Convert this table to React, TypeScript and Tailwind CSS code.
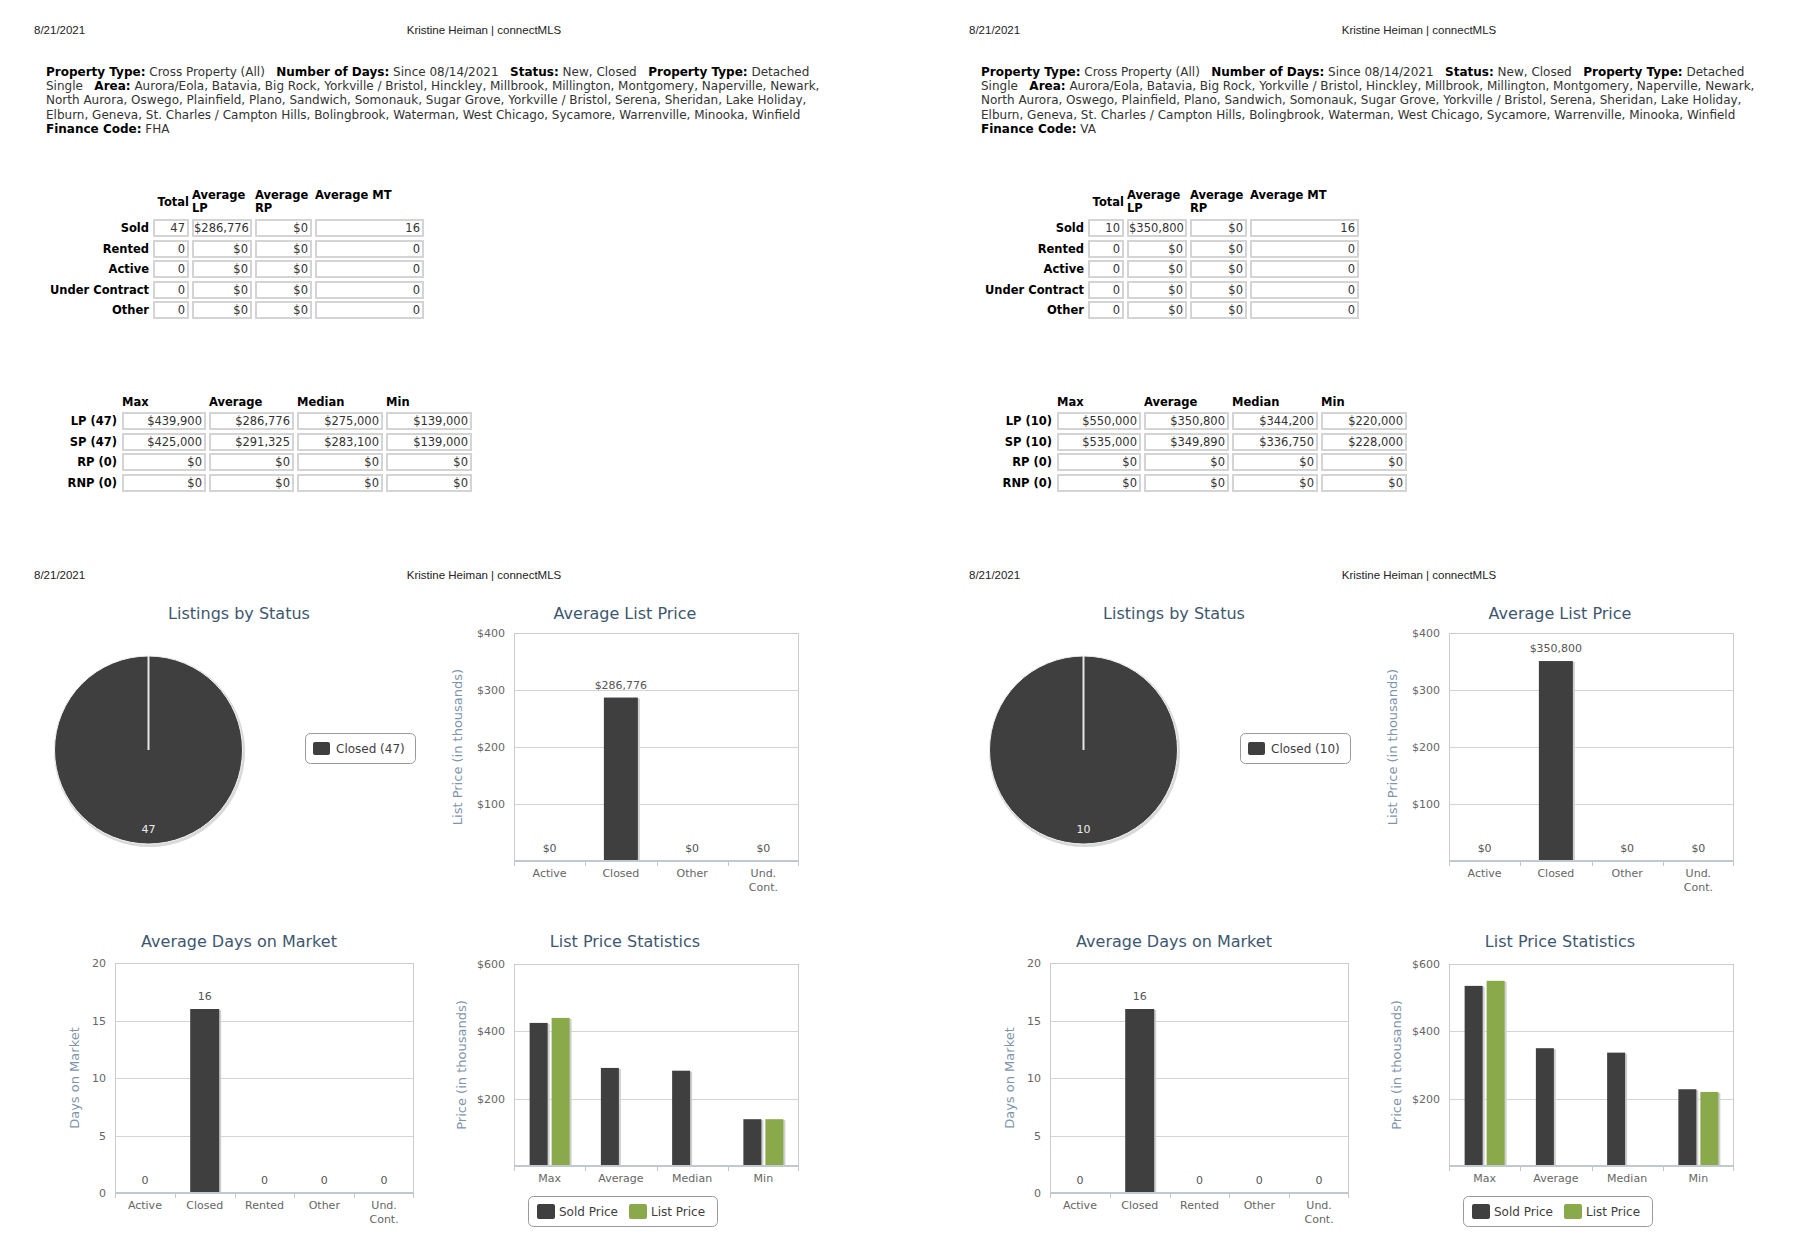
import React from "react";

type Stats = { sold: number[]; list: (number | null)[] };
type PageData = {
  finance: string;
  count: number;
  avgLP: number;
  avgLPLabel: string;
  t1: string[][];
  t2: string[][];
  stats: Stats;
};

const pages: PageData[] = [
  {
    finance: "FHA",
    count: 47,
    avgLP: 286.776,
    avgLPLabel: "$286,776",
    t1: [
      ["Sold", "47", "$286,776", "$0", "16"],
      ["Rented", "0", "$0", "$0", "0"],
      ["Active", "0", "$0", "$0", "0"],
      ["Under Contract", "0", "$0", "$0", "0"],
      ["Other", "0", "$0", "$0", "0"],
    ],
    t2: [
      ["LP (47)", "$439,900", "$286,776", "$275,000", "$139,000"],
      ["SP (47)", "$425,000", "$291,325", "$283,100", "$139,000"],
      ["RP (0)", "$0", "$0", "$0", "$0"],
      ["RNP (0)", "$0", "$0", "$0", "$0"],
    ],
    stats: { sold: [425, 291.325, 283.1, 139], list: [439.9, null, null, 139] },
  },
  {
    finance: "VA",
    count: 10,
    avgLP: 350.8,
    avgLPLabel: "$350,800",
    t1: [
      ["Sold", "10", "$350,800", "$0", "16"],
      ["Rented", "0", "$0", "$0", "0"],
      ["Active", "0", "$0", "$0", "0"],
      ["Under Contract", "0", "$0", "$0", "0"],
      ["Other", "0", "$0", "$0", "0"],
    ],
    t2: [
      ["LP (10)", "$550,000", "$350,800", "$344,200", "$220,000"],
      ["SP (10)", "$535,000", "$349,890", "$336,750", "$228,000"],
      ["RP (0)", "$0", "$0", "$0", "$0"],
      ["RNP (0)", "$0", "$0", "$0", "$0"],
    ],
    stats: { sold: [535, 349.89, 336.75, 228], list: [550, null, null, 220] },
  },
];

const DARK = "#3f3f3f";
const GREEN = "#89a94b";

function PageHeader() {
  return (
    <div className="flex pl-[34px] text-[11.5px] leading-[14px] text-[#222] font-['Liberation_Sans',Arial,sans-serif]">
      <div className="w-[350px]">8/21/2021</div>
      <div className="w-[200px] text-center whitespace-nowrap">Kristine Heiman | connectMLS</div>
    </div>
  );
}

function Criteria({ finance }: { finance: string }) {
  const sp = "\u00a0\u00a0\u00a0";
  return (
    <div className="ml-[46px] mt-[28px] text-[12px] leading-[14.2px] text-[#333] whitespace-nowrap">
      <div>
        <b className="text-black">Property Type:</b> Cross Property (All){sp}
        <b className="text-black">Number of Days:</b> Since 08/14/2021{sp}
        <b className="text-black">Status:</b> New, Closed{sp}
        <b className="text-black">Property Type:</b> Detached
      </div>
      <div>
        Single{sp}
        <b className="text-black">Area:</b> Aurora/Eola, Batavia, Big Rock, Yorkville / Bristol, Hinckley, Millbrook,
        Millington, Montgomery, Naperville, Newark,
      </div>
      <div>
        North Aurora, Oswego, Plainfield, Plano, Sandwich, Somonauk, Sugar Grove, Yorkville / Bristol, Serena,
        Sheridan, Lake Holiday,
      </div>
      <div>
        Elburn, Geneva, St. Charles / Campton Hills, Bolingbrook, Waterman, West Chicago, Sycamore, Warrenville,
        Minooka, Winfield
      </div>
      <div>
        <b className="text-black">Finance Code:</b> {finance}
      </div>
    </div>
  );
}

function Cell({ v }: { v: string }) {
  return (
    <div className="h-[18px] border-2 border-[#d4d4d4] bg-white text-right pr-[2px] leading-[14px] text-[#333] whitespace-nowrap">
      {v}
    </div>
  );
}

function SummaryTable({ rows }: { rows: string[][] }) {
  return (
    <div className="ml-[46px] mt-[53px] text-[11.5px]">
      <div className="grid grid-cols-[104px_36px_60px_57px_109px] gap-x-[3px] h-[26px] leading-[13px] font-bold text-black">
        <div />
        <div className="self-center text-right">Total</div>
        <div>
          Average
          <br />
          LP
        </div>
        <div>
          Average
          <br />
          RP
        </div>
        <div className="whitespace-nowrap">Average MT</div>
      </div>
      <div className="mt-[4px] grid grid-cols-[104px_36px_60px_57px_109px] gap-x-[3px] gap-y-[2.5px]">
        {rows.map((r) => (
          <React.Fragment key={r[0]}>
            <div className="h-[18px] leading-[18px] text-right font-bold text-black pr-[1px] whitespace-nowrap">
              {r[0]}
            </div>
            {r.slice(1).map((v, i) => (
              <Cell key={i} v={v} />
            ))}
          </React.Fragment>
        ))}
      </div>
    </div>
  );
}

function PriceTable({ rows }: { rows: string[][] }) {
  return (
    <div className="ml-[46px] mt-[76.5px] text-[11.5px]">
      <div className="grid grid-cols-[73px_84px_85px_86px_86px] gap-x-[3px] h-[13px] leading-[13px] font-bold text-black">
        <div />
        <div>Max</div>
        <div>Average</div>
        <div>Median</div>
        <div>Min</div>
      </div>
      <div className="mt-[3.5px] grid grid-cols-[73px_84px_85px_86px_86px] gap-x-[3px] gap-y-[2.5px]">
        {rows.map((r) => (
          <React.Fragment key={r[0]}>
            <div className="h-[18px] leading-[18px] text-right font-bold text-black pr-[2px] whitespace-nowrap">
              {r[0]}
            </div>
            {r.slice(1).map((v, i) => (
              <Cell key={i} v={v} />
            ))}
          </React.Fragment>
        ))}
      </div>
    </div>
  );
}

function PieChart({ count }: { count: number }) {
  const cx = 102.5;
  const cy = 153;
  const r = 94;
  return (
    <svg width={386} height={310} className="block">
      <text x={193} y={22} textAnchor="middle" fontSize="16" fill="#3e576f">
        Listings by Status
      </text>
      <circle cx={cx + 1} cy={cy + 1.5} r={r + 1.5} fill="#d9d9d9" />
      <circle cx={cx} cy={cy} r={r} fill={DARK} stroke="#f4f4f4" strokeWidth={1} />
      <line x1={cx} y1={cy - r} x2={cx} y2={cy} stroke="#e6e6e6" strokeWidth={2} />
      <text x={cx} y={236} textAnchor="middle" fontSize="11" fill="#eeeeee">
        {count}
      </text>
      <rect x={259.5} y={136.5} width={110} height={30} rx={5} fill="#fff" stroke="#9a9a9a" />
      <rect x={267} y={145} width={17} height={13} rx={2} fill={DARK} />
      <text x={290} y={156} fontSize="12" fill="#3e3e3e">
        Closed ({count})
      </text>
    </svg>
  );
}

type BarProps = {
  title: string;
  h: number;
  L: number;
  R: number;
  T: number;
  B: number;
  max: number;
  ticks: { v: number; label: string }[];
  cats: string[][];
  series: { color: string; values: (number | null)[] }[];
  barW: number;
  dataLabels?: string[];
  yTitle: string;
  yTitleX: number;
  legend?: boolean;
};

function BarChart(p: BarProps) {
  const cw = (p.R - p.L) / p.cats.length;
  const y = (v: number) => p.B - (v / p.max) * (p.B - p.T);
  const n = p.series.length;
  const gap = 4;
  const groupW = n * p.barW + (n - 1) * gap;
  return (
    <svg width={386} height={p.h} className="block">
      <text x={193} y={22} textAnchor="middle" fontSize="16" fill="#3e576f">
        {p.title}
      </text>
      {p.ticks.map((t) => (
        <g key={t.label}>
          <line x1={p.L} x2={p.R} y1={Math.round(y(t.v)) + 0.5} y2={Math.round(y(t.v)) + 0.5} stroke="#d4d4d4" />
          <text x={p.L - 9} y={y(t.v) + 4} textAnchor="end" fontSize="11" fill="#666">
            {t.label}
          </text>
        </g>
      ))}
      <rect x={p.L + 0.5} y={p.T + 0.5} width={p.R - p.L - 1} height={p.B - p.T} fill="none" stroke="#cccccc" />
      <text
        transform={`translate(${p.yTitleX} ${(p.T + p.B) / 2}) rotate(-90)`}
        textAnchor="middle"
        dominantBaseline="middle"
        fontSize="13"
        fill="#7f95ab"
      >
        {p.yTitle}
      </text>
      {p.series.map((s, si) =>
        s.values.map((v, ci) => {
          if (v === null || v === 0) return null;
          const cx = p.L + cw * (ci + 0.5);
          const x = cx - groupW / 2 + si * (p.barW + gap);
          const top = y(v);
          return (
            <g key={`${si}-${ci}`}>
              <rect x={x + 1} y={top + 1} width={p.barW + 1} height={p.B - top - 1} fill="#cfcfcf" />
              <rect x={x} y={top} width={p.barW} height={p.B - top} fill={s.color} />
            </g>
          );
        })
      )}
      {p.dataLabels &&
        p.dataLabels.map((lab, ci) => {
          const v = p.series[0].values[ci] ?? 0;
          const cx = p.L + cw * (ci + 0.5);
          return (
            <text key={ci} x={cx} y={y(v) - 9} textAnchor="middle" fontSize="11" fill="#555">
              {lab}
            </text>
          );
        })}
      <line x1={p.L} x2={p.R} y1={p.B} y2={p.B} stroke="#c0c8d0" strokeWidth={2} />
      {p.cats.map((_, i) => (
        <line
          key={i}
          x1={Math.round(p.L + cw * i) + 0.5}
          x2={Math.round(p.L + cw * i) + 0.5}
          y1={p.B}
          y2={p.B + 5}
          stroke="#c0c8d0"
        />
      ))}
      <line x1={p.R - 0.5} x2={p.R - 0.5} y1={p.B} y2={p.B + 5} stroke="#c0c8d0" />
      {p.cats.map((c, i) => (
        <text key={i} x={p.L + cw * (i + 0.5)} y={p.B + 16} textAnchor="middle" fontSize="11" fill="#666">
          {c.map((line, li) => (
            <tspan key={li} x={p.L + cw * (i + 0.5)} dy={li === 0 ? 0 : 14}>
              {line}
            </tspan>
          ))}
        </text>
      ))}
      {p.legend && (
        <g>
          <rect x={96.5} y={271.5} width={189} height={30} rx={5} fill="#fff" stroke="#9a9a9a" />
          <rect x={105} y={279} width={18} height={15} rx={2} fill={DARK} />
          <text x={127} y={291} fontSize="12" fill="#3e3e3e">
            Sold Price
          </text>
          <rect x={197} y={279} width={18} height={15} rx={2} fill={GREEN} />
          <text x={219} y={291} fontSize="12" fill="#3e3e3e">
            List Price
          </text>
        </g>
      )}
    </svg>
  );
}

function Page({ d, w }: { d: PageData; w: string }) {
  return (
    <div className={`${w} shrink-0 pt-[23px]`}>
      <PageHeader />
      <Criteria finance={d.finance} />
      <SummaryTable rows={d.t1} />
      <PriceTable rows={d.t2} />
      <div className="mt-[76px]">
        <PageHeader />
      </div>
      <div className="ml-[46px] mt-[15px] grid grid-cols-[386px_386px] gap-y-[18px] font-['DejaVu_Sans',Verdana,sans-serif]">
        <PieChart count={d.count} />
        <BarChart
          title="Average List Price"
          h={310}
          L={82}
          R={367}
          T={36}
          B={264}
          max={400}
          ticks={[
            { v: 400, label: "$400" },
            { v: 300, label: "$300" },
            { v: 200, label: "$200" },
            { v: 100, label: "$100" },
          ]}
          cats={[["Active"], ["Closed"], ["Other"], ["Und.", "Cont."]]}
          series={[{ color: DARK, values: [0, d.avgLP, 0, 0] }]}
          barW={34}
          dataLabels={["$0", d.avgLPLabel, "$0", "$0"]}
          yTitle="List Price (in thousands)"
          yTitleX={26}
        />
        <BarChart
          title="Average Days on Market"
          h={320}
          L={69}
          R={368}
          T={38}
          B={268}
          max={20}
          ticks={[
            { v: 20, label: "20" },
            { v: 15, label: "15" },
            { v: 10, label: "10" },
            { v: 5, label: "5" },
            { v: 0, label: "0" },
          ]}
          cats={[["Active"], ["Closed"], ["Rented"], ["Other"], ["Und.", "Cont."]]}
          series={[{ color: DARK, values: [0, 16, 0, 0, 0] }]}
          barW={29}
          dataLabels={["0", "16", "0", "0", "0"]}
          yTitle="Days on Market"
          yTitleX={29}
        />
        <BarChart
          title="List Price Statistics"
          h={320}
          L={82}
          R={367}
          T={39}
          B={241}
          max={600}
          ticks={[
            { v: 600, label: "$600" },
            { v: 400, label: "$400" },
            { v: 200, label: "$200" },
          ]}
          cats={[["Max"], ["Average"], ["Median"], ["Min"]]}
          series={[
            { color: DARK, values: d.stats.sold },
            { color: GREEN, values: d.stats.list },
          ]}
          barW={18}
          yTitle="Price (in thousands)"
          yTitleX={30}
          legend
        />
      </div>
    </div>
  );
}

export default function App() {
  return (
    <div className="w-[1800px] h-[1260px] overflow-hidden bg-white flex font-['DejaVu_Sans',Verdana,sans-serif]">
      <Page d={pages[0]} w="w-[935px]" />
      <Page d={pages[1]} w="w-[865px]" />
    </div>
  );
}
